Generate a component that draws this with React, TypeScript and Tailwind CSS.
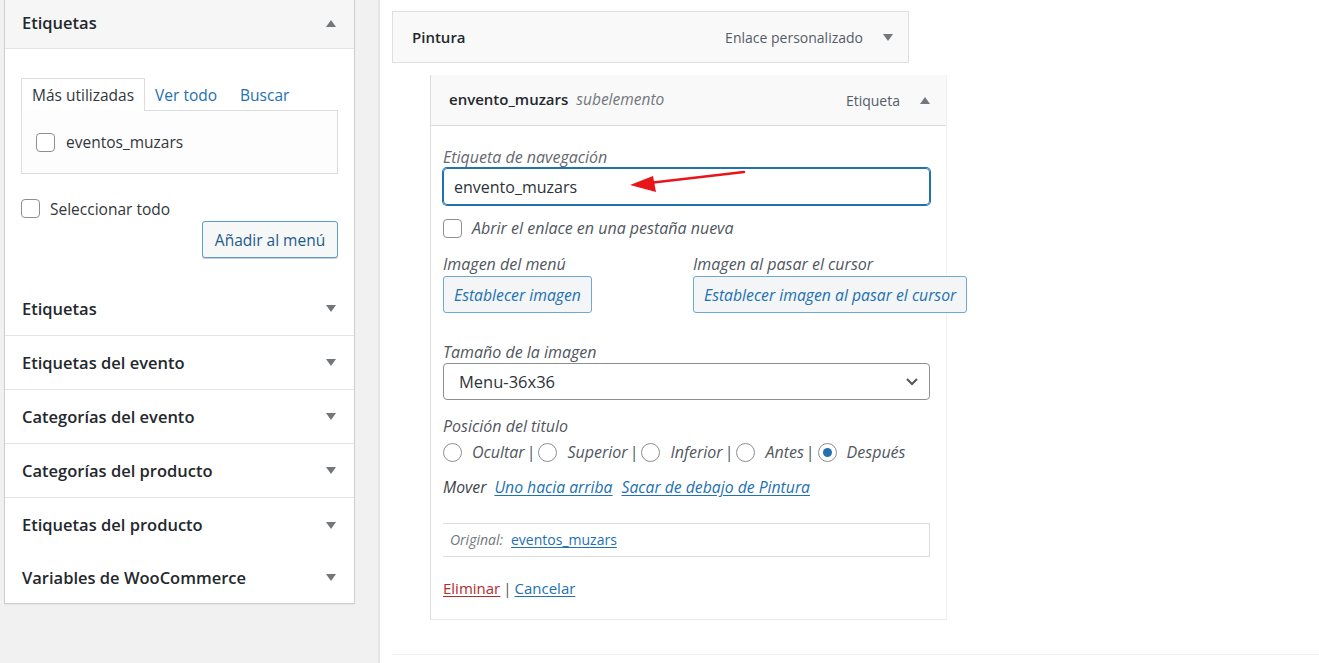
import React from "react";

const FONT = { fontFamily: '"Open Sans", "Noto Sans", sans-serif' };

function TriDown({ className = "" }: { className?: string }) {
  return (
    <svg width="10" height="7" viewBox="0 0 10 7" className={className}>
      <path d="M0 0 L10 0 L5 7 Z" fill="#72777c" />
    </svg>
  );
}
function TriUp({ className = "" }: { className?: string }) {
  return (
    <svg width="10" height="7" viewBox="0 0 10 7" className={className}>
      <path d="M0 7 L10 7 L5 0 Z" fill="#72777c" />
    </svg>
  );
}

function Checkbox() {
  return <span className="inline-block w-[19px] h-[19px] rounded-[4px] border border-[#8c8f94] bg-white shrink-0" />;
}

function Radio({ checked = false }: { checked?: boolean }) {
  return (
    <span className="inline-flex items-center justify-center w-[19px] h-[19px] rounded-full border border-[#8c8f94] bg-white shrink-0">
      {checked && <span className="w-[9px] h-[9px] rounded-full bg-[#2271b1]" />}
    </span>
  );
}

const rows = [
  "Etiquetas",
  "Etiquetas del evento",
  "Categorías del evento",
  "Categorías del producto",
  "Etiquetas del producto",
  "Variables de WooCommerce",
];

function Sep() {
  return <span className="ml-[2px] mr-[3px] not-italic text-[#50575e]">|</span>;
}

export default function App() {
  return (
    <div style={FONT} className="w-[1319px] h-[663px] flex bg-white overflow-hidden text-[#1d2327]">
      {/* Left column */}
      <div className="w-[380px] shrink-0 bg-[#f1f1f1] border-r-2 border-[#e4e4e4] pl-[4px]">
        <div className="-mt-[3px] w-[351px] bg-white border border-[#ccd0d4] shadow-[0_1px_1px_rgba(0,0,0,0.04)]">
          <div className="h-[51px] bg-[#f6f6f6] border-b border-[#e2e4e7] flex items-center justify-between pl-[17px] pr-[18px]">
            <span className="text-[16.5px] font-semibold text-[#23282d]">Etiquetas</span>
            <TriUp />
          </div>
          <div className="px-[16px] pt-[30px] pb-[24px]">
            <div className="flex items-end h-[32px] text-[15.5px] leading-[20px]">
              <div className="h-[33px] px-[10px] flex items-center border-x border-t border-[#dcdcde] bg-white text-[#32373c] relative z-10">
                Más utilizadas
              </div>
              <div className="h-[32px] px-[10px] flex items-center text-[#2271b1]">Ver todo</div>
              <div className="h-[32px] px-[13px] flex items-center text-[#2271b1]">Buscar</div>
            </div>
            <div className="h-[64px] border border-[#dcdcde] bg-[#fdfdfd] flex items-center pl-[14px] gap-[11px] -mt-px text-[15.5px] leading-[20px] text-[#32373c]">
              <Checkbox />
              <span>eventos_muzars</span>
            </div>
            <div className="h-[19px] flex items-center gap-[10px] mt-[25px] text-[15.5px] leading-[20px] text-[#32373c]">
              <Checkbox />
              <span>Seleccionar todo</span>
            </div>
            <div className="flex justify-end mt-[3px]">
              <button className="h-[37px] w-[136px] rounded-[3px] border border-[#5e9bd0] bg-[#f6f7f7] text-[15.5px] leading-[20px] text-[#1d5a8a] shadow-[0_1px_0_#ccc]">
                Añadir al menú
              </button>
            </div>
          </div>
          {rows.map((r, i) => (
            <div
              key={r}
              className={`flex items-center justify-between pl-[17px] pr-[18px] ${
                i < 4 ? "h-[54px] border-b border-[#e2e4e7]" : i === 4 ? "h-[54px]" : "h-[51px]"
              }`}
            >
              <span className="text-[16.5px] leading-[22px] font-semibold text-[#23282d]">{r}</span>
              <TriDown />
            </div>
          ))}
        </div>
      </div>

      {/* Right column */}
      <div className="flex-1 bg-white pl-[12px] pt-[11px]">
        <div className="w-[517px] h-[52px] bg-[#f9f9f9] border border-[#dfdfdf] flex items-center justify-between pl-[19px] pr-[15px]">
          <span className="text-[15px] font-semibold text-[#23282d]">Pintura</span>
          <div className="flex items-center gap-[20px]">
            <span className="text-[14px] text-[#555d66]">Enlace personalizado</span>
            <TriDown />
          </div>
        </div>

        <div className="ml-[38px] mt-[12px] w-[517px] border-l border-r border-b border-l-[#dcdcde] border-r-[#f0f0f0] border-b-[#e8e8e8]">
          <div className="h-[51px] bg-[#f9f9f9] border-b border-[#dcdcde] flex items-center justify-between pl-[18px] pr-[16px]">
            <div className="flex items-baseline gap-[8px]">
              <span className="text-[15px] font-semibold text-[#23282d]">envento_muzars</span>
              <span className="text-[15.5px] italic text-[#72777c]">subelemento</span>
            </div>
            <div className="flex items-center gap-[20px]">
              <span className="text-[14px] text-[#555d66]">Etiqueta</span>
              <TriUp />
            </div>
          </div>

          <div className="pl-[12px] pt-[21px] pb-[21px] text-[16px] leading-[20px]">
            <div className="italic text-[#646970]">Etiqueta de navegación</div>
            <div className="relative mt-[1px] w-[487px] h-[37px] rounded-[4px] border border-[#2271b1] shadow-[0_0_0_1px_#2271b1] flex items-center pl-[10px] text-[16px] text-[#2c3338]">
              envento_muzars
              <svg className="absolute left-0 top-0" width="487" height="37" viewBox="0 0 487 37">
                <line x1="300" y1="3" x2="205" y2="14" stroke="#e8151b" strokeWidth="2.5" strokeLinecap="round" />
                <path d="M186 16 L209 7 L212 23 Z" fill="#e8151b" />
              </svg>
            </div>

            <div className="h-[20px] flex items-center gap-[10px] mt-[13px]">
              <Checkbox />
              <span className="italic text-[#50575e]">Abrir el enlace en una pestaña nueva</span>
            </div>

            <div className="flex mt-[16px]">
              <div className="w-[250px] shrink-0">
                <div className="italic text-[#50575e]">Imagen del menú</div>
                <button className="mt-[2px] h-[37px] px-[10px] rounded-[3px] border border-[#6ea8d3] bg-[#f3f5f6] italic text-[15.75px] text-[#2271b1]">
                  Establecer imagen
                </button>
              </div>
              <div className="shrink-0">
                <div className="italic text-[#50575e]">Imagen al pasar el cursor</div>
                <button className="mt-[2px] h-[37px] px-[10px] rounded-[3px] border border-[#6ea8d3] bg-[#f3f5f6] italic text-[15.75px] text-[#2271b1] whitespace-nowrap">
                  Establecer imagen al pasar el cursor
                </button>
              </div>
            </div>

            <div className="italic text-[#50575e] mt-[29px]">Tamaño de la imagen</div>
            <div className="mt-[1px] w-[487px] h-[37px] rounded-[4px] border border-[#8c8f94] flex items-center justify-between pl-[15px] pr-[10px] text-[16.5px] text-[#2c3338]">
              <span>Menu-36x36</span>
              <svg width="14" height="9" viewBox="0 0 14 9">
                <path d="M2 2 L7 7 L12 2" stroke="#50575e" strokeWidth="2" fill="none" />
              </svg>
            </div>

            <div className="italic text-[#50575e] mt-[16px]">Posición del titulo</div>
            <div className="h-[20px] flex items-center mt-[6px] italic text-[#50575e]">
              <Radio />
              <span className="ml-[10px]">Ocultar</span>
              <Sep />
              <Radio />
              <span className="ml-[10px]">Superior</span>
              <Sep />
              <Radio />
              <span className="ml-[10px]">Inferior</span>
              <Sep />
              <Radio />
              <span className="ml-[10px]">Antes</span>
              <Sep />
              <Radio checked />
              <span className="ml-[10px]">Después</span>
            </div>

            <div className="h-[20px] flex items-center mt-[15px] italic text-[15.75px] text-[#3c434a]">
              <span>Mover</span>
              <span className="ml-[8px] text-[#2271b1] underline underline-offset-2">Uno hacia arriba</span>
              <span className="ml-[9px] text-[#2271b1] underline underline-offset-2">Sacar de debajo de Pintura</span>
            </div>

            <div className="mt-[26px] w-[487px] h-[34px] border-t border-r border-b border-[#dcdcde] flex items-center pl-[7px] text-[14px]">
              <span className="italic text-[#72777c]">Original:</span>
              <span className="ml-[8px] text-[#2271b1] underline underline-offset-2">eventos_muzars</span>
            </div>

            <div className="h-[20px] mt-[21px] flex items-center gap-[3px] text-[15px]">
              <span className="text-[#b32d2e] underline underline-offset-2">Eliminar</span>
              <span className="text-[#50575e]">|</span>
              <span className="text-[#2271b1] underline underline-offset-2">Cancelar</span>
            </div>
          </div>
        </div>

        <div className="mt-[34px] border-t border-[#f0f0f0]" />
      </div>
    </div>
  );
}
